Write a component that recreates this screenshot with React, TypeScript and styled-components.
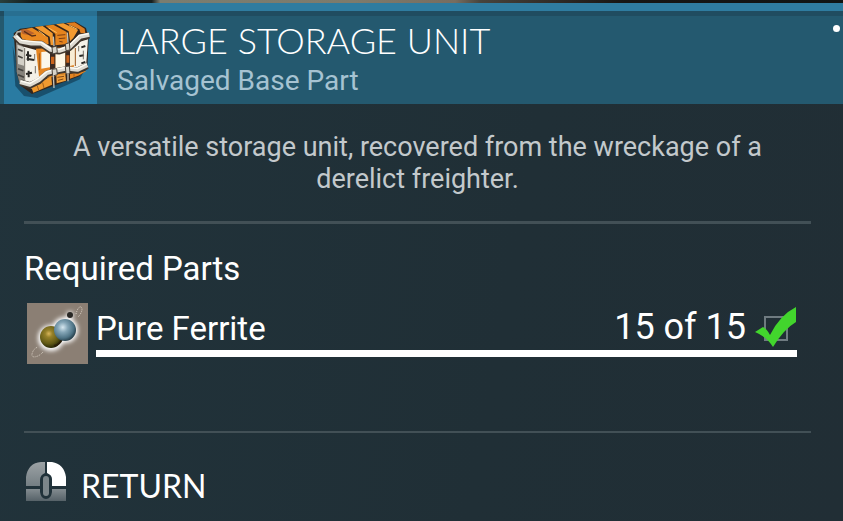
import React from "react";
import styled, { createGlobalStyle } from "styled-components";

const GlobalStyle = createGlobalStyle`
  *, *::before, *::after { box-sizing: border-box; }
  body {
    margin: 0;
    background: #202f36;
    color: #fff;
    font-family: Roboto, "Liberation Sans", sans-serif;
  }
`;

const Panel = styled.main`
  min-height: 100vh;
  background: linear-gradient(100deg, #21333b 0%, #202f36 60%, #212e35 100%);
`;

const SceneEdge = styled.div`
  height: 3px;
  background: linear-gradient(90deg, #29403d 0%, #131c1b 4%, #17201f 18%, #7a7d70 19%, #7d7b6c 42%, #776d60 54%, #47443d 57%, #35302b 64%, #171614 74%, #101414 100%);
`;

const Header = styled.header`
  display: flex;
  align-items: stretch;
  border-top: 8px solid #2f7ca0;
  background: linear-gradient(180deg, #204c60 0, #204c60 5px, #24596f 5px);
`;

const ItemTile = styled.div`
  flex: none;
  width: 93px;
  height: 93px;
  margin-left: 4px;
  background: linear-gradient(180deg, #286f91 0, #286f91 5px, #2a7ba2 5px);
  svg { display: block; }
`;

const Heading = styled.div`
  flex: 1;
  min-width: 0;
  padding: 7px 0 0 20px;
`;

const Title = styled.h1`
  margin: 0;
  font: 300 36px/44px Lato, sans-serif;
`;

const Subtitle = styled.p`
  margin: 0;
  font-size: 28px;
  line-height: 38px;
  color: #a6c3d2;
`;

const Marker = styled.span`
  flex: none;
  width: 7px;
  height: 7px;
  margin: 14px 3px 0 0;
  border-radius: 50%;
  background: #fff;
`;

const Body = styled.div`
  padding: 27px 32px 0 24px;
`;

const Description = styled.p`
  margin: 0;
  padding: 0 32px 26px;
  text-align: center;
  font-size: 27px;
  line-height: 32px;
  color: #c3c9cc;
`;

const Rule = styled.hr<{ $weight: number }>`
  height: ${(p) => p.$weight}px;
  margin: 0;
  border: 0;
  background: #425056;
`;

const Section = styled.section`
  padding: 23px 14px 67px 0;
`;

const SectionTitle = styled.h2`
  margin: 0;
  font-size: 33px;
  font-weight: 400;
  line-height: 44px;
`;

const Part = styled.div`
  display: flex;
  gap: 8px;
  margin-top: 12px;
  padding-left: 3px;
`;

const PartTile = styled.div`
  flex: none;
  width: 61px;
  height: 61px;
  background: #8b7f74;
  svg { display: block; }
`;

const PartInfo = styled.div`
  flex: 1;
  min-width: 0;
`;

const PartLine = styled.div`
  display: flex;
  align-items: center;
  height: 47px;
`;

const PartName = styled.label`
  flex: 1;
  padding-top: 4px;
  font-size: 33px;
  line-height: 40px;
`;

const Amount = styled.span`
  font-size: 36px;
  line-height: 44px;
`;

const Tick = styled.span`
  position: relative;
  flex: none;
  width: 42px;
  height: 42px;
  margin-left: 9px;
  svg {
    position: absolute;
    inset: 0;
    pointer-events: none;
  }
`;

const TickInput = styled.input`
  appearance: none;
  display: block;
  width: 24px;
  height: 25px;
  margin: 10px 0 0 9px;
  border: 2px solid #6f7b81;
`;

const Bar = styled.div`
  height: 7px;
`;

const BarFill = styled.div`
  height: 100%;
  background: #fff;
`;

const Footer = styled.footer`
  padding: 29px 0 12px;
`;

const ReturnButton = styled.button`
  display: flex;
  align-items: flex-start;
  gap: 15px;
  padding: 0 0 0 2px;
  border: 0;
  background: none;
  color: #fff;
  font: 400 32px/48px Lato, sans-serif;
  cursor: pointer;
`;

function CrateIcon() {
  return (
    <svg width="93" height="93" viewBox="0 -15 279 279" aria-hidden="true">
      <path d="M26 90L34 210L60 240L100 246L228 190L240 165L90 222L50 200Z" fill="#123f57" opacity=".7" />
      <path d="M29 52L48 38L214 17L246 36L254 68L250 158L226 181L166 203L84 234L48 208L38 170Z" fill="#33261d" />

      <path d="M50 42L84 35L132 64L134 84L118 90L94 84L60 78L50 60Z" fill="#ea8a22" />
      <path d="M92 33L116 30L146 52L148 88L140 87L137 62Z" fill="#f39a30" />
      <path d="M124 29L148 26L188 48L190 84L154 88L154 54Z" fill="#e5841e" />
      <path d="M156 25L178 22L222 42L208 66L198 76L194 46Z" fill="#f39a30" />
      <path d="M186 22L212 19L242 38L244 52L230 52L226 40Z" fill="#dd7c1f" />
      <path d="M48 42L68 40L92 52L78 58L56 54Z" fill="#b9622c" />
      <path d="M60 46L84 60L96 58" fill="none" stroke="#5b2f17" strokeWidth="4" />
      <path d="M160 58L184 56M164 68L184 66M166 76L176 78" stroke="#7c3d10" strokeWidth="3" />
      <path d="M104 44L124 60M134 36L158 50M196 28L220 40" stroke="#ffc062" strokeWidth="3" />

      <path d="M36 78L60 92L64 200L48 206L38 168Z" fill="#85827b" />
      <path d="M40 86L60 94L62 150L42 144Z" fill="#d3d0c7" />
      <path d="M60 92L104 104L106 190L82 218L60 200Z" fill="#f4f1e8" />
      <path d="M96 98L216 92L216 168L106 190Z" fill="#e58622" />
      <path d="M206 84L252 70L246 154L210 158Z" fill="#f5f2e8" />
      <path d="M112 108L138 106L138 154L112 158Z" fill="#fbf7ea" />
      <path d="M154 104L184 102L184 152L154 158Z" fill="#fff8e6" />
      <path d="M198 100L212 96L212 146L198 150Z" fill="#f8edd4" />
      <path d="M138 104L154 100L154 162L138 164ZM184 98L198 94L198 156L184 158Z" fill="#3a2a22" />
      <path d="M141 122h10v22h-10ZM187 118h9v22h-9Z" fill="#c9641c" />
      <path d="M106 112V162M214 96V150" stroke="#9b571c" strokeWidth="3" />

      <path d="M82 214L142 180L144 206L88 230Z" fill="#f09a2f" />
      <path d="M157 178L184 174L186 194L158 202Z" fill="#f2a03a" />
      <path d="M198 174L248 164L226 178L198 188Z" fill="#e58420" />
      <path d="M100 210L104 222M116 200L120 216M210 174V182" stroke="#a3611e" strokeWidth="3" />
      <path d="M160 184L180 181M162 193L178 189" stroke="#814814" strokeWidth="3" />

      <g fill="none" strokeLinejoin="round">
        <path d="M32 58L50 78L82 84L112 84L140 104L166 106L196 96L214 80L228 64L256 58" stroke="#40372e" strokeWidth="19" />
        <path d="M32 58L50 76L82 82L112 82L140 101L166 104L196 94L214 76L228 62L256 56" stroke="#dedbd2" strokeWidth="13" />
        <path d="M34 56L52 73L112 79L140 98L166 100L194 90L226 58L254 53" stroke="#fffdf5" strokeWidth="4" />
        <path d="M50 200L78 208L104 196L128 174L154 166L188 160L220 164L250 150" stroke="#40372e" strokeWidth="19" />
        <path d="M48 198L78 206L104 192L128 171L154 164L188 157L220 161L250 147" stroke="#dedbd2" strokeWidth="13" />
        <path d="M50 195L78 202L102 188L128 167L154 160L188 154L220 158L248 144" stroke="#fffdf5" strokeWidth="4" />
      </g>

      <path d="M144 94L158 90L160 110L146 114ZM184 84L196 80L198 102L186 104ZM144 160L158 158L160 176L146 180ZM184 152L196 150L198 172L186 174Z" fill="#d8d5ca" stroke="#494138" strokeWidth="3" />
      <path d="M148 178L150 216M192 172L192 196M148 62L150 90M190 50L192 80" stroke="#c3c0b6" strokeWidth="4" />
      <path d="M66 116L82 120M72 106V134M68 128L90 132M74 164V184M66 174L84 170M232 94L244 90M226 120L240 118M232 142L244 138" stroke="#292825" strokeWidth="6" />
      <path d="M92 114V134M94 150V172M62 96V194M238 104V130M224 90V106" stroke="#777269" strokeWidth="3" />
      <path d="M42 100L56 106M42 120L56 126M42 158L58 164M42 176L60 184" stroke="#43413d" strokeWidth="5" />
      <path d="M34 60L40 48L52 46" fill="none" stroke="#b8b4a8" strokeWidth="5" />
    </svg>
  );
}

function FerriteIcon() {
  return (
    <svg width="61" height="61" viewBox="27 303 61 61" aria-hidden="true">
      <defs>
        <radialGradient id="gold" cx=".4" cy=".35" r=".65">
          <stop offset="0" stopColor="#d8b55a" />
          <stop offset=".25" stopColor="#968129" />
          <stop offset=".7" stopColor="#625a16" />
          <stop offset="1" stopColor="#292907" />
        </radialGradient>
        <radialGradient id="steel" cx=".4" cy=".38" r=".65">
          <stop offset="0" stopColor="#d6e7ef" />
          <stop offset=".35" stopColor="#85a6b7" />
          <stop offset=".75" stopColor="#4e7385" />
          <stop offset="1" stopColor="#243c47" />
        </radialGradient>
        <filter id="glow" x="-40%" y="-40%" width="180%" height="180%">
          <feGaussianBlur stdDeviation="2" />
        </filter>
      </defs>
      <g filter="url(#glow)" fill="#fff">
        <circle cx="51" cy="338" r="13" />
        <circle cx="65" cy="330" r="13" />
        <circle cx="70" cy="315" r="4" opacity=".7" />
      </g>
      <circle cx="51" cy="337" r="11" fill="url(#gold)" />
      <path d="M54 346c4-1 7-4 8-7" fill="none" stroke="#2b1f0a" strokeWidth="2" />
      <circle cx="65" cy="330" r="11" fill="url(#steel)" />
      <circle cx="70" cy="315" r="3" fill="#282724" />
      <g fill="none" stroke="#e6ded2" strokeWidth="1" strokeDasharray="1 1" opacity=".8">
        <path d="M76 314c1-4 3-8 5-7s1 6-3 10" />
        <path d="M43 352c-4 5-12 7-11 2 1-4 3-6 6-7" />
      </g>
    </svg>
  );
}

function CheckMark() {
  return (
    <svg width="42" height="42" viewBox="754 308 42 42" aria-hidden="true">
      <path d="M754 334L762 329Q766 331 769 337Q779 317 795 309V324Q783 331 772 349Q766 339 754 334Z" fill="#42d52d" />
    </svg>
  );
}

function MouseIcon() {
  return (
    <svg width="40" height="40" viewBox="26 462 40 40" aria-hidden="true">
      <defs>
        <linearGradient id="mouseTop" x1="0" y1="0" x2="0" y2="1">
          <stop offset="0" stopColor="#9ca2a5" />
          <stop offset="1" stopColor="#747e83" />
        </linearGradient>
        <linearGradient id="mouseBase" x1="0" y1="0" x2="0" y2="1">
          <stop offset="0" stopColor="#838c90" />
          <stop offset="1" stopColor="#566268" />
        </linearGradient>
      </defs>
      <path d="M26 486V477Q28 463 41 462H45V473Q40 475 40 480V486Z" fill="url(#mouseTop)" />
      <path d="M47 462H52Q64 464 66 477V486H52V479Q52 475 47 473Z" fill="#fff" />
      <path d="M26 489H40V492Q41 499 46 499T52 492V489H66V501H26Z" fill="url(#mouseBase)" />
      <rect x="43" y="476" width="6" height="20" rx="3" fill="#7c868a" />
    </svg>
  );
}

const part = { name: "Pure Ferrite", owned: 15, needed: 15 };

export default function App() {
  return (
    <>
      <GlobalStyle />
      <Panel>
        <SceneEdge />
        <Header>
          <ItemTile><CrateIcon /></ItemTile>
          <Heading>
            <Title>LARGE STORAGE UNIT</Title>
            <Subtitle>Salvaged Base Part</Subtitle>
          </Heading>
          <Marker />
        </Header>
        <Body>
          <Description>
            A versatile storage unit, recovered from the wreckage of a derelict freighter.
          </Description>
          <Rule $weight={3} />
          <Section>
            <SectionTitle>Required Parts</SectionTitle>
            <Part>
              <PartTile><FerriteIcon /></PartTile>
              <PartInfo>
                <PartLine>
                  <PartName htmlFor="ferrite">{part.name}</PartName>
                  <Amount>{part.owned} of {part.needed}</Amount>
                  <Tick>
                    <TickInput id="ferrite" type="checkbox" checked={part.owned >= part.needed} readOnly />
                    <CheckMark />
                  </Tick>
                </PartLine>
                <Bar role="progressbar" aria-label={part.name} aria-valuenow={part.owned} aria-valuemax={part.needed}>
                  <BarFill style={{ width: `${(part.owned / part.needed) * 100}%` }} />
                </Bar>
              </PartInfo>
            </Part>
          </Section>
          <Rule $weight={2} />
          <Footer>
            <ReturnButton type="button">
              <MouseIcon />
              RETURN
            </ReturnButton>
          </Footer>
        </Body>
      </Panel>
    </>
  );
}
